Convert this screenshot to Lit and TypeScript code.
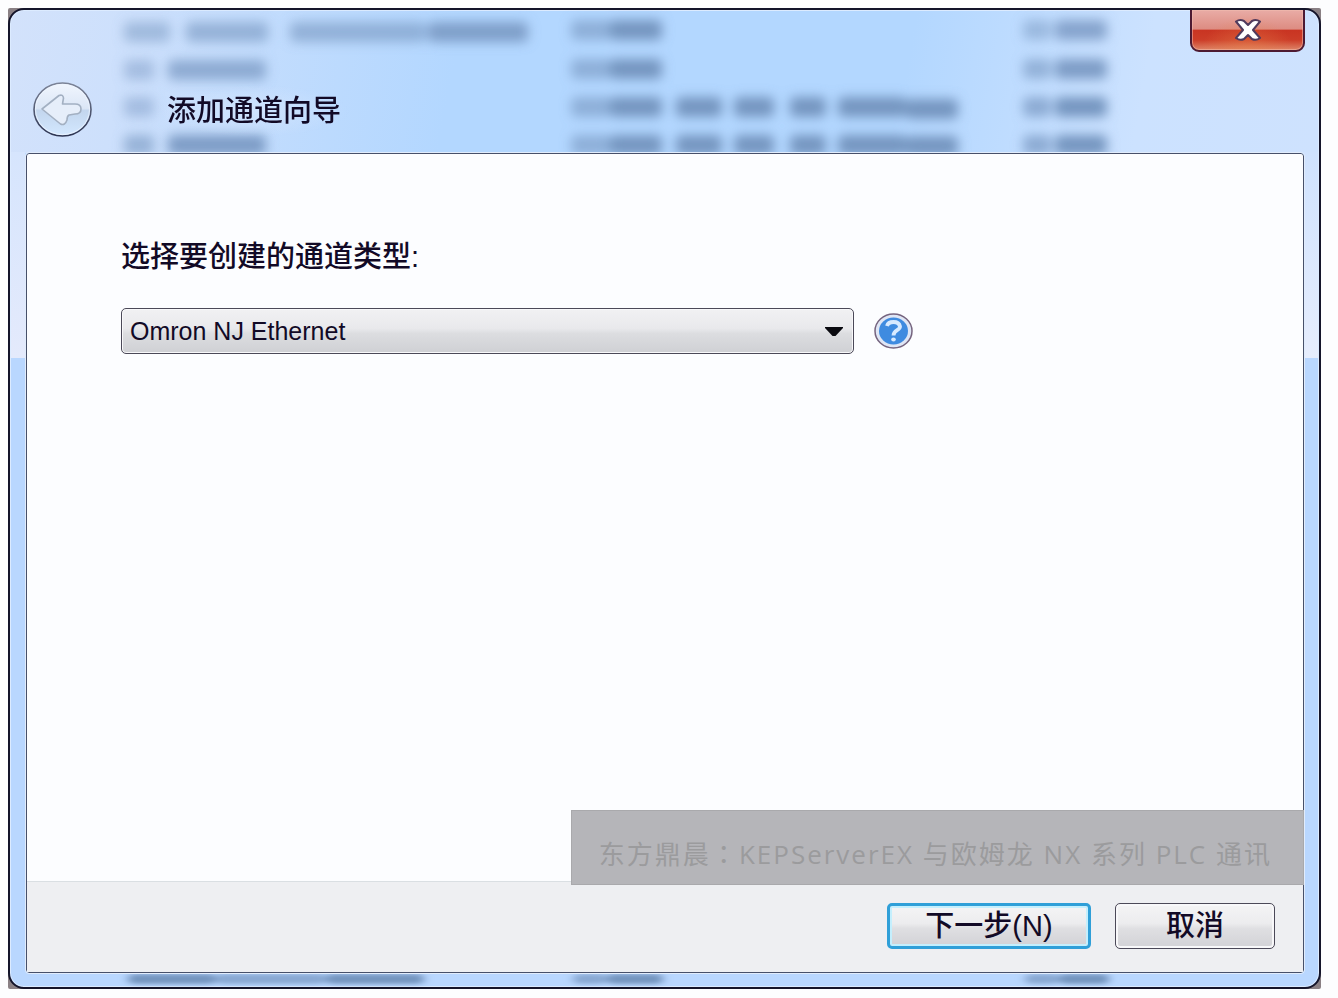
import { LitElement, html, css, svg } from "lit";
import { customElement, state } from "lit/decorators.js";

type Blob = [x: number, y: number, width: number, opacity: number];

// Out-of-focus rows of the list window showing through the glass title bar.
const HEADER_BLOBS: Blob[] = [
  [114, 12, 46, 0.5], [176, 12, 82, 0.6], [280, 12, 136, 0.6], [418, 12, 100, 0.85],
  [114, 50, 30, 0.45], [158, 50, 98, 0.7],
  [114, 87, 30, 0.45],
  [114, 125, 30, 0.6], [158, 125, 98, 0.9],
  [561, 10, 40, 0.6], [600, 10, 52, 1],
  [561, 49, 40, 0.6], [600, 49, 52, 1],
  [561, 87, 40, 0.6], [600, 87, 52, 1],
  [561, 125, 40, 0.6], [600, 125, 52, 1],
  [666, 87, 46, 1], [724, 87, 40, 1], [780, 87, 36, 1], [828, 87, 68, 1], [896, 89, 52, 1],
  [666, 125, 46, 1], [724, 125, 40, 1], [780, 125, 36, 1], [828, 125, 68, 1], [896, 126, 52, 1],
  [1013, 10, 28, 0.5], [1045, 10, 52, 0.8],
  [1013, 49, 28, 0.6], [1045, 49, 52, 0.9],
  [1013, 87, 28, 0.7], [1045, 87, 52, 1],
  [1013, 125, 28, 0.7], [1045, 125, 52, 1],
];

const FOOTER_BLOBS: Blob[] = [
  [118, 2, 88, 1], [206, 2, 110, 0.7], [316, 2, 98, 1],
  [563, 2, 34, 0.7], [597, 2, 56, 1],
  [1015, 2, 34, 0.7], [1049, 2, 50, 1],
];

const blobs = (list: Blob[], height: number) =>
  list.map(
    ([x, y, width, opacity]) =>
      svg`<rect x=${x} y=${y} width=${width} height=${height} rx="5" opacity=${opacity}></rect>`
  );

@customElement("app-root")
export class AppRoot extends LitElement {
  static styles = css`
    :host {
      display: flex;
      box-sizing: border-box;
      min-height: 100vh;
      padding: 8px 17px 9px 8px;
      background: #fdfdfe;
      color: #120a26;
      font-family: "Liberation Sans", "Noto Sans CJK SC", sans-serif;
      font-size: 29px;
    }
    .backdrop {
      flex: 1;
      display: flex;
      background: #8a8084;
      border-radius: 2px;
    }
    .window {
      position: relative;
      flex: 1;
      display: flex;
      flex-direction: column;
      padding: 0 15px 14px 16px;
      border: 2px solid #14142a;
      border-radius: 16px;
      overflow: hidden;
      background:
        linear-gradient(#d6e5fd, #e4eafc) left 0 top 142px / 15px 206px no-repeat,
        linear-gradient(#cfe2fe, #e6edfd) right 0 top 142px / 15px 206px no-repeat,
        linear-gradient(100deg, #d3e2fb 0, #cde0fc 9%, #b3d7ff 34%, #b3d7ff 68%, #cce2ff 86%, #cee2fe 100%) 0 0 / 100% 143px no-repeat,
        #b9d7ff;
      box-shadow: inset 0 0 0 1px #dcebff;
    }
    .glass {
      position: absolute;
      left: 0;
      width: 100%;
      fill: #7595c0;
      pointer-events: none;
    }
    .glass.top {
      top: 0;
      height: 143px;
    }
    .glass.bottom {
      bottom: 0;
      height: 15px;
    }
    .titlebar {
      position: relative;
      display: flex;
      align-items: flex-end;
      height: 143px;
      box-sizing: border-box;
      padding: 0 0 16px 7px;
      gap: 67px;
    }
    h1 {
      margin: 0;
      padding: 4px 8px;
      font-size: 29px;
      line-height: 44px;
      font-weight: 500;
      background: radial-gradient(closest-side, #d8e8ff99, #d8e8ff00);
    }
    button,
    select {
      font: inherit;
      color: inherit;
      margin: 0;
      padding: 0;
      box-sizing: border-box;
      border: 1px solid #4b4958;
      cursor: pointer;
    }
    .back {
      width: 59px;
      height: 55px;
      border: 0;
      background: none;
    }
    .back svg,
    .help svg,
    .close svg {
      display: block;
    }
    .close {
      position: absolute;
      right: -1px;
      top: -2px;
      width: 115px;
      height: 44px;
      display: grid;
      place-items: center;
      border: 2px solid #4d1a32;
      border-radius: 0 0 9px 9px;
      background:
        radial-gradient(ellipse at 50% 110%, #e8844a88, #e8844a00 60%),
        linear-gradient(#e9aca6 0, #dd8c82 48%, #c93422 50%, #cc3d28 75%, #de8468 100%);
      box-shadow: inset 0 0 0 1px #f2bdb088;
    }
    .panel {
      position: relative;
      flex: 1;
      display: flex;
      flex-direction: column;
      border: 1px solid #47506a;
      outline: 1px solid #e1ecfc;
      border-radius: 3px;
      background: #fcfdff;
    }
    main {
      flex: 1;
      padding: 81px 94px;
    }
    .label {
      display: block;
      line-height: 44px;
      font-weight: 500;
    }
    .row {
      display: flex;
      align-items: center;
      gap: 20px;
      margin-top: 29px;
    }
    .combo {
      display: grid;
      align-items: center;
      width: 68%;
      max-width: 733px;
    }
    .combo > * {
      grid-area: 1 / 1;
    }
    .combo svg {
      justify-self: end;
      margin-right: 11px;
      pointer-events: none;
    }
    select {
      appearance: none;
      width: 100%;
      height: 46px;
      padding: 0 40px 0 8px;
      font-size: 25px;
      border-radius: 5px;
      background: linear-gradient(#f1f1f3 0, #e9e9ec 44%, #dcdde0 56%, #cfd0d4 100%);
      box-shadow: inset 0 0 0 1px #f8f8fa;
    }
    .help {
      border: 0;
      background: none;
    }
    footer {
      display: flex;
      justify-content: flex-end;
      gap: 24px;
      padding: 21px 28px 23px;
      border-top: 1px solid #dadfe3;
      background: #eeeff2;
    }
    .action {
      width: 160px;
      height: 46px;
      line-height: 44px;
      font-weight: 500;
      border-radius: 5px;
      background: linear-gradient(#f4f4f5 0, #ececee 44%, #dfdfe2 56%, #d2d2d6 100%);
      box-shadow: inset 0 0 0 2px #f8f8fa;
    }
    .action.primary {
      width: 204px;
      border: 3px solid #2f9fd8;
      line-height: 40px;
      box-shadow: inset 0 0 0 2px #c4effd;
    }
    .caption {
      position: absolute;
      right: -1px;
      bottom: 87px;
      box-sizing: border-box;
      height: 75px;
      padding: 12px 31px 0 27px;
      border: 1px solid #a9a9ac;
      background: #b5b5b9;
      color: #9b9b9d;
      font-family: "Open Sans", "Noto Sans CJK SC", sans-serif;
      font-size: 26px;
      line-height: 60px;
      letter-spacing: 2px;
      white-space: nowrap;
      pointer-events: none;
    }
    .colon {
      font-family: "Noto Sans CJK TC", sans-serif;
    }
  `;

  @state() private channel = "Omron NJ Ethernet";

  private onChange(e: Event) {
    this.channel = (e.target as HTMLSelectElement).value;
  }

  render() {
    return html`
      <div class="backdrop">
        <div class="window">
          <svg class="glass top" aria-hidden="true">
            <defs>
              <filter id="soft" x="-10%" y="-20%" width="120%" height="140%">
                <feGaussianBlur stdDeviation="6"></feGaussianBlur>
              </filter>
            </defs>
            <g filter="url(#soft)">${blobs(HEADER_BLOBS, 20)}</g>
          </svg>
          <svg class="glass bottom" aria-hidden="true">
            <defs>
              <filter id="thin" x="-10%" y="-100%" width="120%" height="300%">
                <feGaussianBlur stdDeviation="5 2"></feGaussianBlur>
              </filter>
            </defs>
            <g filter="url(#thin)">${blobs(FOOTER_BLOBS, 10)}</g>
          </svg>

          <header class="titlebar">
            <button class="back" aria-label="返回">
              <svg width="59" height="55" viewBox="0 0 59 55">
                <defs>
                  <linearGradient id="disc" x2="0" y2="1">
                    <stop offset="0" stop-color="#f1f6fe"></stop>
                    <stop offset=".48" stop-color="#dbe6f6"></stop>
                    <stop offset=".52" stop-color="#c3d6ee"></stop>
                    <stop offset="1" stop-color="#d3e8ff"></stop>
                  </linearGradient>
                  <linearGradient id="ring" x2="0" y2="1">
                    <stop offset="0" stop-color="#7c8498"></stop>
                    <stop offset="1" stop-color="#2c3350"></stop>
                  </linearGradient>
                </defs>
                <ellipse cx="29.500" cy="27.500" rx="28.500" ry="26.500" fill="url(#disc)" stroke="url(#ring)" stroke-width="1.600"></ellipse>
                <ellipse cx="29.500" cy="27.500" rx="27" ry="25" fill="none" stroke="#eef5ff" stroke-width="1" opacity=".8"></ellipse>
                <path d="M9 27 26 13.500Q30 12 30.500 16L29.500 22H42Q48 22 48 27T42 32L36 33Q34 34 34 38 32 44 27.500 42Z" fill="#e6eefa" stroke="#a3b0c2" stroke-width="1.600" stroke-linejoin="round"></path>
              </svg>
            </button>
            <h1>添加通道向导</h1>
            <button class="close" aria-label="关闭">
              <svg width="28" height="24" viewBox="0 0 28 24">
                <path d="M2 3.500Q6 1 10 3L14 7 18 3Q22 1 26 3.500L19 12 26 20Q22 23 18 21L14 17 10 21Q6 23 2 20L9 12Z" fill="#fff" stroke="#503a5c" stroke-width="2" stroke-linejoin="round"></path>
              </svg>
            </button>
          </header>

          <section class="panel">
            <main>
              <label class="label" for="channel">选择要创建的通道类型:</label>
              <div class="row">
                <div class="combo">
                  <select id="channel" .value=${this.channel} @change=${this.onChange}>
                    <option>Omron NJ Ethernet</option>
                  </select>
                  <svg width="18" height="9" viewBox="0 0 18 9" aria-hidden="true">
                    <path d="M0 0H18V1L10.500 9H7.500L0 1Z" fill="#0a0a10"></path>
                  </svg>
                </div>
                <button class="help" aria-label="帮助">
                  <svg width="39" height="36" viewBox="0 0 39 36">
                    <ellipse cx="19.500" cy="18" rx="18.500" ry="17" fill="#dfe6f5" stroke="#75647f" stroke-width="1.500"></ellipse>
                    <ellipse cx="19.500" cy="18" rx="14.500" ry="13.500" fill="#3f8be0"></ellipse>
                    <path d="M13 13Q14 9 19.500 9T26 13.500C26 17.500 19.500 17 19.500 22.500" fill="none" stroke="#d8eaff" stroke-width="3.800"></path>
                    <ellipse cx="19.500" cy="26.500" rx="2.300" ry="2" fill="#d8eaff"></ellipse>
                  </svg>
                </button>
              </div>
            </main>
            <footer>
              <button class="action primary">下一步(N)</button>
              <button class="action">取消</button>
            </footer>
            <div class="caption">东方鼎晨<span class="colon">：</span>KEPServerEX 与欧姆龙 NX 系列 PLC 通讯</div>
          </section>
        </div>
      </div>
    `;
  }
}
